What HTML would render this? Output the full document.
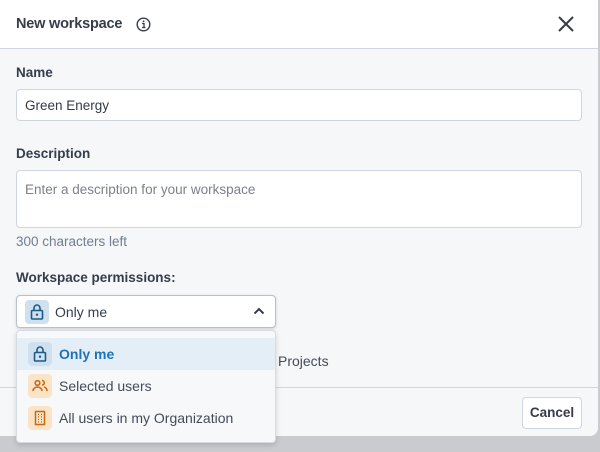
<!DOCTYPE html>
<html><head><style>
*{box-sizing:border-box;margin:0;padding:0}
body{width:600px;height:452px;background:#c9cbcf;font-family:"Liberation Sans",sans-serif;position:relative;overflow:hidden;color:#333a48}
.dlg{position:absolute;left:0;top:0;width:598px;height:436px;background:#f5f7f9;border-radius:0 0 8px 0;overflow:hidden}
.hd{height:49px;background:#fff;border-bottom:1px solid #cdd5e0;position:relative}
.hd .t{position:absolute;left:16px;top:16px;font-size:14.5px;font-weight:bold;color:#353c4c;letter-spacing:-0.2px}
.lbl{position:absolute;left:16px;font-size:13.5px;font-weight:bold;color:#353c4c}
.inp{position:absolute;left:16px;width:566px;background:#fff;border:1px solid #cfd6e0;border-radius:4px;font-size:13.5px}
.ft{position:absolute;left:0;top:387px;width:598px;height:49px;border-top:1px solid #cdd5e0}
.btn{position:absolute;right:16px;top:9px;width:60px;height:32px;background:#fff;border:1px solid #cfd6e0;border-radius:4px;font-size:13.5px;font-weight:bold;text-align:center;line-height:30px;color:#353c4c}
.sel{position:absolute;left:16px;top:295px;width:260px;height:33px;background:#fff;border:1px solid #b9c1cc;border-radius:4px;box-shadow:0 1px 3px rgba(0,0,0,.15)}
.ic{position:absolute;width:24px;height:24px;border-radius:4px}
.menu{position:absolute;left:16px;top:330px;width:260px;height:113px;background:#f7f8fa;border:1px solid #d6dbe2;border-radius:4px;box-shadow:0 2px 6px rgba(0,0,0,.15)}
.it{position:absolute;left:0;width:258px;height:32px;font-size:14px}
.it span{position:absolute;left:42px;top:8px}
</style></head><body>
<div class="dlg">
 <div class="hd"><div class="t">New workspace</div>
  <svg style="position:absolute;left:136px;top:17px" width="15" height="15" viewBox="0 0 15 15"><circle cx="7.5" cy="7.5" r="6.3" fill="none" stroke="#353c4c" stroke-width="1.4"/><path d="M6 6.5h2v4M6 10.5h3.5" stroke="#353c4c" stroke-width="1.3" fill="none"/><circle cx="7.6" cy="4.3" r=".9" fill="#353c4c"/></svg>
  <svg style="position:absolute;left:557px;top:15px" width="18" height="18" viewBox="0 0 18 18"><path d="M2 2L16 16M16 2L2 16" stroke="#353c4c" stroke-width="2"/></svg>
 </div>
 <div class="lbl" style="top:65px">Name</div>
 <div class="inp" style="top:89px;height:32px;padding:8px 8px;color:#333a48">Green Energy</div>
 <div class="lbl" style="top:146px">Description</div>
 <div class="inp" style="top:170px;height:58px;padding:11px 8px;color:#7b818c">Enter a description for your workspace</div>
 <div style="position:absolute;left:16px;top:234px;font-size:13.5px;color:#6d7f91">300 characters left</div>
 <div class="lbl" style="top:270px">Workspace permissions:</div>
 <div style="position:absolute;left:278px;top:353px;font-size:14px;color:#444b58">Projects</div>
 <div class="ft"><div class="btn">Cancel</div></div>
</div>
<div class="sel">
 <div class="ic" style="left:8px;top:4px;background:#cfe1ef"><svg width="24" height="24" viewBox="0 0 24 24"><rect x="6.5" y="10.5" width="11" height="8.5" rx="1" fill="none" stroke="#1f5a86" stroke-width="1.6"/><path d="M9 10.5V8a3 3 0 0 1 6 0v2.5" fill="none" stroke="#1f5a86" stroke-width="1.6"/><circle cx="12" cy="14.7" r="1.2" fill="#1f5a86"/></svg></div>
 <span style="position:absolute;left:38px;top:8px;font-size:14px;color:#353c4c">Only me</span>
 <svg style="position:absolute;left:236px;top:10px" width="12" height="10" viewBox="0 0 12 10"><path d="M1.5 7.5L6 3l4.5 4.5" stroke="#353c4c" stroke-width="2" fill="none"/></svg>
</div>
<div class="menu">
 <div class="it" style="top:7px;background:#e4eef6">
  <div class="ic" style="left:11px;top:4px;background:#cfe1ef"><svg width="24" height="24" viewBox="0 0 24 24"><rect x="6.5" y="10.5" width="11" height="8.5" rx="1" fill="none" stroke="#1f5a86" stroke-width="1.6"/><path d="M9 10.5V8a3 3 0 0 1 6 0v2.5" fill="none" stroke="#1f5a86" stroke-width="1.6"/><circle cx="12" cy="14.7" r="1.2" fill="#1f5a86"/></svg></div>
  <span style="font-weight:bold;color:#1d73b8">Only me</span></div>
 <div class="it" style="top:39px">
  <div class="ic" style="left:11px;top:4px;background:#fbe3c8"><svg width="24" height="24" viewBox="0 0 24 24"><circle cx="9.5" cy="9" r="2.3" fill="none" stroke="#c96a12" stroke-width="1.6"/><path d="M5 17a4.5 4 0 0 1 9 0" fill="none" stroke="#c96a12" stroke-width="1.6"/><path d="M14 6.5a2.3 2.3 0 0 1 0 4.6M16 13a4 4 0 0 1 3 4" fill="none" stroke="#c96a12" stroke-width="1.6"/></svg></div>
  <span style="color:#444b58">Selected users</span></div>
 <div class="it" style="top:71px">
  <div class="ic" style="left:11px;top:4px;background:#fbe3c8"><svg width="24" height="24" viewBox="0 0 24 24"><rect x="7.5" y="5.5" width="9" height="13" fill="none" stroke="#c96a12" stroke-width="1.5"/><path d="M10 8.5h1M13 8.5h1M10 11h1M13 11h1M10 13.5h1M13 13.5h1M10 16h1M13 16h1" stroke="#c96a12" stroke-width="1.3"/></svg></div>
  <span style="color:#444b58">All users in my Organization</span></div>
</div>
</body></html>
